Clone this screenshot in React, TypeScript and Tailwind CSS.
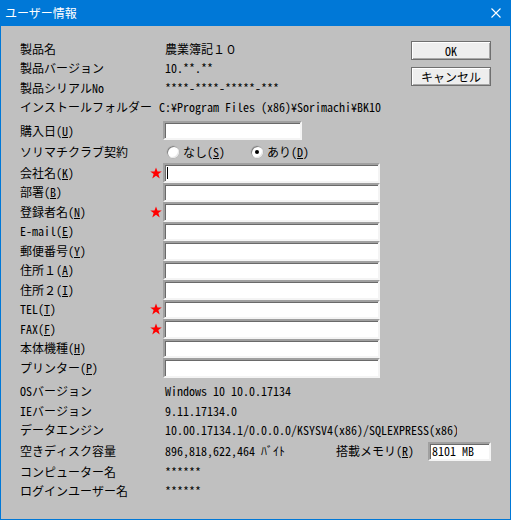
import React from "react";

// sunken white edit box, classic Win32 look
const editBox =
  "bg-white border-2 border-t-[#a0a0a0] border-l-[#a0a0a0] border-r-[#f4f4f4] border-b-[#f4f4f4] shadow-[inset_1px_1px_0_#6a6a6a]";

function Star() {
  return (
    <svg width="12" height="12" viewBox="0 0 24 24" className="mr-[1px]">
      <polygon
        points="12,1 15,9 23.5,9 16.7,14.2 19.5,23 12,17.6 4.5,23 7.3,14.2 0.5,9 9,9"
        fill="#ff0000"
      />
    </svg>
  );
}

function Radio({ checked }: { checked?: boolean }) {
  return (
    <span className="w-[12px] h-[12px] rounded-full bg-white flex items-center justify-center shadow-[inset_1px_1px_0_#808080,inset_-1px_-1px_0_#e6e6e6,0_0_0_0.5px_#b0b0b0]">
      {checked && <span className="w-[4px] h-[4px] rounded-full bg-black" />}
    </span>
  );
}

const K = ({ c }: { c: string }) => <span className="underline underline-offset-[1px]">{c}</span>;

const infoRows = [
  { label: "製品名", value: "農業簿記１０" },
  { label: "製品バージョン", value: "10.**.**" },
  { label: "製品シリアルNo", value: "****-****-*****-***" },
  { label: "インストールフォルダー", value: "C:¥Program Files (x86)¥Sorimachi¥BK10" },
];

const inputRows = [
  { label: <>会社名(<K c="K" />)</>, star: true, caret: true },
  { label: <>部署(<K c="B" />)</> },
  { label: <>登録者名(<K c="N" />)</>, star: true },
  { label: <>E-mail(<K c="E" />)</> },
  { label: <>郵便番号(<K c="Y" />)</> },
  { label: <>住所１(<K c="A" />)</> },
  { label: <>住所２(<K c="I" />)</> },
  { label: <>TEL(<K c="T" />)</>, star: true },
  { label: <>FAX(<K c="F" />)</>, star: true },
  { label: <>本体機種(<K c="H" />)</> },
  { label: <>プリンター(<K c="P" />)</> },
];

export default function App() {
  return (
    <div className="w-[511px] h-[520px] bg-[#0078d7] flex flex-col text-[12px] text-black font-['Noto_Sans_Mono_CJK_JP','Noto_Sans_CJK_JP',monospace]">
      {/* Title bar */}
      <div className="h-[26px] flex items-center justify-between pl-[5px] pr-[10px] text-white font-['Noto_Sans_CJK_JP',sans-serif]">
        <span>ユーザー情報</span>
        <svg width="10" height="10" viewBox="0 0 10 10">
          <path d="M0.5 0.5 L9.5 9.5 M9.5 0.5 L0.5 9.5" stroke="#fff" strokeWidth="1.1" />
        </svg>
      </div>

      {/* Body */}
      <div className="flex-1 mx-[1px] mb-[1px] bg-[#c0c0c0] flex flex-col px-[19px] pt-[13px]">
        <div className="flex">
          <div className="flex flex-col w-[361px]">
            {infoRows.map((r) => (
              <div key={r.label} className="h-[19.5px] flex items-center">
                <span className="w-[143px] whitespace-nowrap">{r.label}</span>
                <span className="pl-[2px] whitespace-nowrap">{r.value}</span>
              </div>
            ))}

            <div className="h-[19.5px] mt-[4px] flex items-center">
              <span className="w-[143px]">
                購入日(<K c="U" />)
              </span>
              <div className={`${editBox} w-[139px] h-[19px]`} />
            </div>

            <div className="h-[22.5px] flex items-center">
              <span className="w-[143px] whitespace-nowrap">ソリマチクラブ契約</span>
              <div className="flex items-center ml-[4px]">
                <Radio />
                <span className="ml-[4px]">
                  なし(<K c="S" />)
                </span>
              </div>
              <div className="flex items-center ml-[26px]">
                <Radio checked />
                <span className="ml-[4px]">
                  あり(<K c="D" />)
                </span>
              </div>
            </div>

            {inputRows.map((r, i) => (
              <div key={i} className="h-[19.5px] flex items-center">
                <span className="w-[143px] flex items-center justify-between whitespace-nowrap">
                  <span>{r.label}</span>
                  {r.star && <Star />}
                </span>
                <div className={`${editBox} w-[217px] h-[19.5px] flex items-center pl-[2px]`}>
                  {r.caret && <span className="w-px h-[12px] bg-black" />}
                </div>
              </div>
            ))}
          </div>

          {/* Buttons */}
          <div className="ml-auto w-[80px] flex flex-col">
            <button className="mt-[2px] h-[19px] bg-[#eeeeee] border border-[#6f6f6f] shadow-[inset_1px_1px_0_#ffffff,inset_-1px_-1px_0_#a8a8a8] flex items-center justify-center">
              OK
            </button>
            <button className="mt-[7px] h-[19px] bg-[#eeeeee] border border-[#6f6f6f] shadow-[inset_1px_1px_0_#ffffff,inset_-1px_-1px_0_#a8a8a8] flex items-center justify-center">
              キャンセル
            </button>
          </div>
        </div>

        {/* System info */}
        <div className="flex flex-col mt-[4px]">
          <div className="h-[19.5px] flex items-center">
            <span className="w-[145px]">OSバージョン</span>
            <span>Windows 10 10.0.17134</span>
          </div>
          <div className="h-[19.5px] flex items-center">
            <span className="w-[145px]">IEバージョン</span>
            <span>9.11.17134.0</span>
          </div>
          <div className="h-[19.5px] flex items-center">
            <span className="w-[145px]">データエンジン</span>
            <span className="w-[292px] overflow-hidden whitespace-nowrap">
              10.00.17134.1/0.0.0.0/KSYSV4(x86)/SQLEXPRESS(x86)
            </span>
          </div>
          <div className="h-[22px] flex items-center">
            <span className="w-[145px]">空きディスク容量</span>
            <span className="w-[171px] whitespace-nowrap">896,818,622,464 ﾊﾞｲﾄ</span>
            <span className="whitespace-nowrap">
              搭載メモリ(<K c="R" />)
            </span>
            <div className={`${editBox} ml-auto w-[63px] h-[19px] flex items-center pl-[2px] whitespace-nowrap`}>
              8101 MB
            </div>
          </div>
          <div className="h-[19.5px] flex items-center">
            <span className="w-[145px]">コンピューター名</span>
            <span>******</span>
          </div>
          <div className="h-[19.5px] flex items-center">
            <span className="w-[145px]">ログインユーザー名</span>
            <span>******</span>
          </div>
        </div>
      </div>
    </div>
  );
}
